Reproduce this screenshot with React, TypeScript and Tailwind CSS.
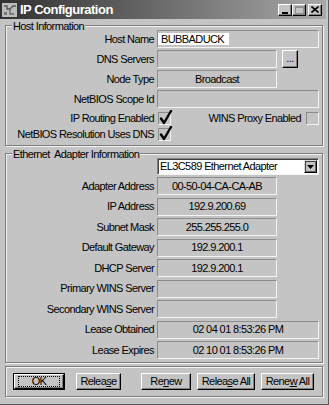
import React from "react";

function Field({ wide, children }: { wide?: boolean; children?: React.ReactNode }) {
  return (
    <div
      className={
        (wide ? "w-[162px]" : "w-[120px]") +
        " ml-[3px] h-[18px] border border-t-[#8c8c8c] border-l-[#8c8c8c] border-b-[#f4f4f4] border-r-[#f4f4f4] flex items-center justify-center text-black"
      }
    >
      {children}
    </div>
  );
}

function Label({ children }: { children: React.ReactNode }) {
  return <div className="w-[148px] text-right whitespace-nowrap">{children}</div>;
}

function Row({ label, children }: { label: string; children?: React.ReactNode }) {
  return (
    <div className="flex items-center h-[18px]">
      <Label>{label}</Label>
      {children}
    </div>
  );
}

function Check({ checked }: { checked?: boolean }) {
  return (
    <div className="relative w-[13px] h-[13px] border border-t-[#8c8c8c] border-l-[#8c8c8c] border-b-[#f4f4f4] border-r-[#f4f4f4]">
      {checked && (
        <svg className="absolute left-[0px] top-[-3px]" width="14" height="15" viewBox="0 0 14 15">
          <path d="M2 8.5 L5 13 L12 1" fill="none" stroke="#000" strokeWidth="2.4" strokeLinecap="round" strokeLinejoin="round" />
        </svg>
      )}
    </div>
  );
}

function Group({ title, children, className }: { title: string; children: React.ReactNode; className?: string }) {
  return (
    <div className={"relative border border-[#7c7c7c] shadow-[inset_1px_1px_0_#f4f4f4,1px_1px_0_#f4f4f4] " + (className ?? "")}>
      <div className="absolute left-[6px] top-[-7px] px-[1px] bg-[#c4c4c4] leading-[14px] whitespace-pre">{title}</div>
      {children}
    </div>
  );
}

function Btn({ children, def, w }: { children: React.ReactNode; def?: boolean; w: string }) {
  const inner = (
    <div className="h-full w-full border border-t-white border-l-white border-r-black border-b-black shadow-[inset_-1px_-1px_0_#808080] flex items-center justify-center">
      {def ? (
        <span className="w-[42px] h-[11px] border border-dotted border-black flex items-center justify-center">{children}</span>
      ) : (
        children
      )}
    </div>
  );
  return (
    <div className={w + " h-[17px] " + (def ? "border border-black" : "")}>{inner}</div>
  );
}

function TitleBtn({ children }: { children: React.ReactNode }) {
  return (
    <div className="w-[14px] h-[12px] bg-[#c4c4c4] border border-t-white border-l-white border-r-black border-b-black shadow-[inset_-1px_-1px_0_#808080] flex items-center justify-center">
      {children}
    </div>
  );
}

export default function App() {
  return (
    <div className="w-[329px] h-[405px] bg-[#c4c4c4] font-['Liberation_Sans',Arial,sans-serif] text-[11px] tracking-[-0.6px] text-black leading-[13px] flex flex-col overflow-hidden border-r border-r-[#5a5a5a] border-b border-b-[#5a5a5a]">
      {/* title bar */}
      <div className="h-[19px] mr-[2px] bg-[linear-gradient(90deg,#303030,#666666_45%,#a8a8a8)] flex items-center pl-[2px] pr-[4px]">
        <div className="w-[15px] h-[14px] bg-[#bcbcbc] flex items-center justify-center">
          <svg width="14" height="13" viewBox="0 0 14 13">
            <path d="M1 3 L4 3 L4 6 L7 6" fill="none" stroke="#555" strokeWidth="1.3" />
            <path d="M7 6 L10 3 L13 3" fill="none" stroke="#555" strokeWidth="1.3" />
            <path d="M7 6 L7 11 L11 11" fill="none" stroke="#666" strokeWidth="1.3" />
            <rect x="1" y="9" width="3" height="3" fill="#777" />
          </svg>
        </div>
        <div className="ml-[3px] text-white font-bold text-[13px] tracking-[-0.5px]">IP Configuration</div>
        <div className="flex-1" />
        <div className="flex items-center">
          <TitleBtn>
            <div className="w-[6px] h-[2px] bg-black mt-[6px] mr-[1px]" />
          </TitleBtn>
          <TitleBtn>
            <div className="w-[9px] h-[8px] border border-[#909090] border-t-2" />
          </TitleBtn>
          <div className="w-[2px]" />
          <TitleBtn>
            <svg width="8" height="7" viewBox="0 0 8 7">
              <path d="M0.5 0.5 L7.5 6.5 M7.5 0.5 L0.5 6.5" stroke="#000" strokeWidth="1.6" />
            </svg>
          </TitleBtn>
        </div>
      </div>

      <div className="flex-1 flex flex-col pl-[5px] pr-[5px] pt-[6px]">
        <Group title="Host Information" className="pt-[4px] pb-[3px]">
          <div className="flex flex-col gap-[2px]">
            <Row label="Host Name">
              <div className="ml-[3px] w-[162px] h-[18px] border border-t-[#8c8c8c] border-l-[#8c8c8c] border-b-[#f4f4f4] border-r-[#f4f4f4] flex items-center">
                <span className="bg-white h-[12px] pl-[3px] pr-[5px] leading-[12px]">BUBBADUCK</span>
              </div>
            </Row>
            <Row label="DNS Servers">
              <Field />
              <div className="ml-[5px] w-[16px] h-[18px] border border-t-white border-l-white border-r-black border-b-black shadow-[inset_-1px_-1px_0_#808080] flex items-center justify-center leading-[10px] pb-[2px]">
                ...
              </div>
            </Row>
            <Row label="Node Type">
              <Field>Broadcast</Field>
            </Row>
            <Row label="NetBIOS Scope Id">
              <Field wide />
            </Row>
          </div>
          <div className="flex flex-col mt-[2px]">
            <div className="flex items-center h-[16px] pr-[3px]">
              <Label>IP Routing Enabled</Label>
              <div className="ml-[4px]">
                <Check checked />
              </div>
              <div className="flex-1" />
              <div className="whitespace-nowrap">WINS Proxy Enabled</div>
              <div className="ml-[5px]">
                <Check />
              </div>
            </div>
            <div className="flex items-center h-[16px]">
              <Label>NetBIOS Resolution Uses DNS</Label>
              <div className="ml-[4px]">
                <Check checked />
              </div>
            </div>
          </div>
        </Group>

        <Group title={"Ethernet\u00a0 Adapter Information"} className="mt-[7px] pt-[4px] pb-[3px]">
          <div className="flex items-center h-[17px] mb-[2px]">
            <div className="w-[148px]" />
            <div className="ml-[3px] w-[162px] h-[17px] bg-white border border-t-[#808080] border-l-[#808080] border-b-[#f4f4f4] border-r-[#f4f4f4] shadow-[inset_1px_1px_0_#404040] flex items-center pl-[2px] pr-[1px]">
              <span className="flex-1 whitespace-nowrap">EL3C589 Ethernet Adapter</span>
              <div className="w-[13px] h-[13px] bg-[#c4c4c4] border border-t-[#dcdcdc] border-l-[#dcdcdc] border-r-black border-b-black shadow-[inset_-1px_-1px_0_#606060,inset_1px_1px_0_#404040] flex items-center justify-center">
                <svg width="7" height="4" viewBox="0 0 7 4">
                  <path d="M0 0 L7 0 L3.5 4 Z" fill="#000" />
                </svg>
              </div>
            </div>
          </div>
          <div className="flex flex-col gap-[2.5px]">
            <Row label="Adapter Address">
              <Field>00-50-04-CA-CA-AB</Field>
            </Row>
            <Row label="IP Address">
              <Field>192.9.200.69</Field>
            </Row>
            <Row label="Subnet Mask">
              <Field>255.255.255.0</Field>
            </Row>
            <Row label="Default Gateway">
              <Field>192.9.200.1</Field>
            </Row>
            <Row label="DHCP Server">
              <Field>192.9.200.1</Field>
            </Row>
            <Row label="Primary WINS Server">
              <Field />
            </Row>
            <Row label="Secondary WINS Server">
              <Field />
            </Row>
            <Row label="Lease Obtained">
              <Field wide>02 04 01 8:53:26 PM</Field>
            </Row>
            <Row label="Lease Expires">
              <Field wide>02 10 01 8:53:26 PM</Field>
            </Row>
          </div>
        </Group>

        <div className="mt-[3px] border border-[#7c7c7c] shadow-[inset_1px_1px_0_#f4f4f4,1px_1px_0_#f4f4f4] h-[31px] flex items-center pl-[7px] pr-[8px]">
          <Btn def w="w-[52px]">OK</Btn>
          <div className="w-[11px]" />
          <Btn w="w-[45px]">
            <span>
              Relea<span className="underline">s</span>e
            </span>
          </Btn>
          <div className="flex-1" />
          <Btn w="w-[50px]">
            <span>
              Re<span className="underline">n</span>ew
            </span>
          </Btn>
          <div className="w-[6px]" />
          <Btn w="w-[58px]">
            <span>
              Relea<span className="underline">s</span>e All
            </span>
          </Btn>
          <div className="w-[6px]" />
          <Btn w="w-[53px]">
            <span>
              Rene<span className="underline">w</span> All
            </span>
          </Btn>
        </div>
      </div>
    </div>
  );
}
